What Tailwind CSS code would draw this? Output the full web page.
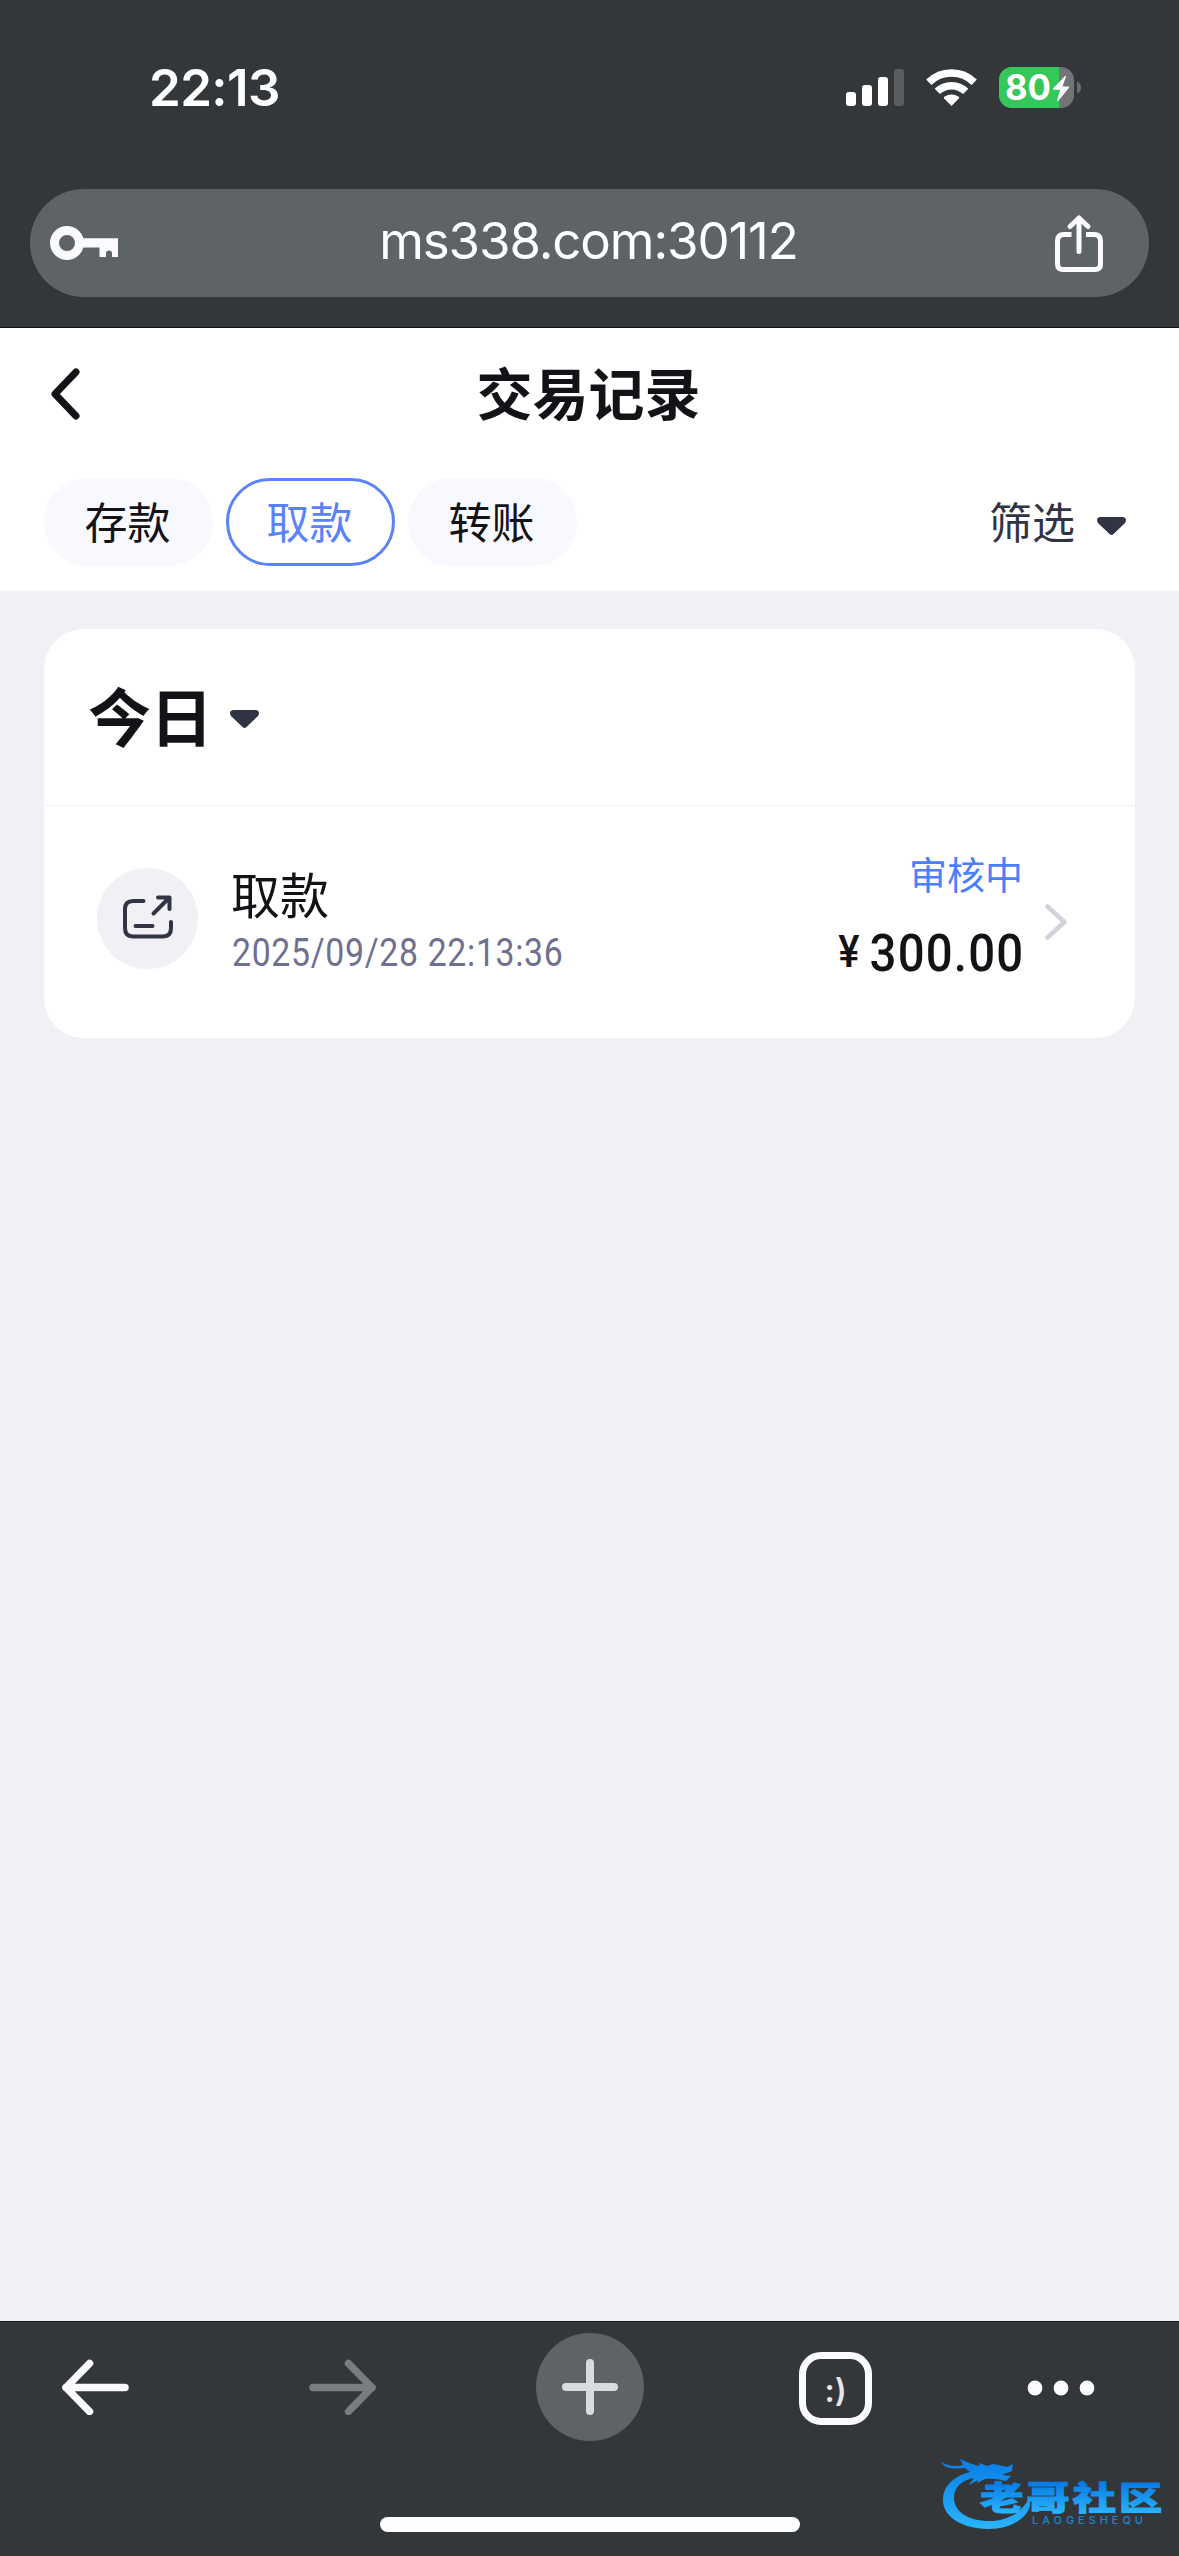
<!DOCTYPE html>
<html lang="zh-CN">
<head>
<meta charset="utf-8">
<title>交易记录</title>
<script src="https://cdn.jsdelivr.net/npm/@tailwindcss/browser@4"></script>
</head>
<body class="w-[1179px] h-[2556px] overflow-hidden bg-[#f1f0f5] flex flex-col font-['Noto_Sans_CJK_SC',sans-serif] text-[#121217]">

<!-- Browser top chrome -->
<header class="h-[328px] shrink-0 bg-[#33373a] border-b border-[#15171a] flex flex-col">
  <div class="h-[189px] shrink-0 flex items-start justify-between pl-[149px] pr-[98px] pt-[67px]">
    <span class="font-['Inter',sans-serif] font-semibold text-[51px] leading-[42px] text-white whitespace-nowrap tracking-[-0.6px]">22:13</span>
    <div class="flex items-start">
      <svg class="block" width="58" height="42" viewBox="0 0 58 42" fill="#fff">
        <rect x="0" y="25" width="10" height="14" rx="3"/>
        <rect x="16" y="18" width="10" height="21" rx="3"/>
        <rect x="32" y="10" width="10" height="29" rx="3"/>
        <rect x="48" y="2" width="10" height="37" rx="3" fill="#5b5c5e"/>
      </svg>
      <svg class="block ml-[22px]" width="51" height="42" viewBox="0 0 51 42" fill="none" stroke="#fff" stroke-width="7.5">
        <path d="M2.8 15.2 A32.5 32.5 0 0 1 48.2 15.2"/>
        <path d="M11.3 24.4 A20.5 20.5 0 0 1 39.7 24.4"/>
        <path d="M25.5 39 L18 31.2 Q17.4 30.4 18.2 29.8 Q25.5 25 32.8 29.8 Q33.6 30.4 33 31.2 Z" fill="#fff" stroke="none"/>
      </svg>
      <svg class="block ml-[22px]" width="82" height="42" viewBox="0 0 82 42">
        <clipPath id="cell"><rect x="0" y="0" width="75" height="41" rx="13"/></clipPath>
        <g clip-path="url(#cell)">
          <rect width="75" height="41" fill="#737477"/>
          <rect width="60" height="41" fill="#34c759"/>
        </g>
        <path d="M78 14.5 Q82 16 82 20.5 Q82 25 78 26.5 Z" fill="#6a6c6e"/>
        <text x="6" y="33.4" font-family="Inter" font-weight="700" font-size="35" textLength="46" lengthAdjust="spacingAndGlyphs" fill="#fff">80</text>
        <path d="M66 9 L54 21.6 Q53.400 22.700 54.600 22.800 L61 22.800 L58 33.500 Q58.400 34.800 59.400 33.800 L70 20.800 Q70.600 19.600 69.400 19.500 L63.500 19.500 L67 9.600 Q67 8.300 66 9 Z" fill="#fff"/>
      </svg>
    </div>
  </div>
  <div class="mx-[30px] h-[108px] rounded-full bg-[#5e6367] flex items-center justify-between pl-5 pr-[46px]">
    <svg class="block" width="68" height="36" viewBox="0 0 68 36" fill="#fbfbff">
      <path fill-rule="evenodd" d="M17 1a17 17 0 1 1 0 34a17 17 0 0 1 0-34Z M17 10a8 8 0 1 0 0 16a8 8 0 0 0 0-16Z"/>
      <path d="M32 13.300 H68 V32 H62 V28.500 Q62 25.500 59 25.500 Q56 25.500 56 28.500 V32 H49.500 V22.600 H32 Z"/>
    </svg>
    <span class="font-['Inter',sans-serif] text-[51px] leading-[60px] text-white whitespace-nowrap tracking-[-1.1px] mb-[4px] ml-[4px]">ms338.com:30112</span>
    <svg class="block" width="48" height="58" viewBox="0 0 48 58" fill="none" stroke="#fbfbff" stroke-width="5" stroke-linecap="round" stroke-linejoin="round">
      <path stroke-linecap="butt" d="M16.500 20.500 H9 Q2.500 20.500 2.500 27 V50 Q2.500 55.500 8 55.500 H40 Q45.500 55.500 45.500 50 V27 Q45.500 20.500 39 20.500 H31"/>
      <path d="M24 37.500 V4 M15 12.500 L24 4 L33 12.500"/>
    </svg>
  </div>
</header>

<!-- Page header -->
<section class="h-[263px] shrink-0 bg-white flex flex-col">
  <div class="h-[132px] grid grid-cols-[1fr_auto_1fr] items-center pl-[51px]">
    <svg class="block" width="30" height="52" viewBox="0 0 30 52" fill="none" stroke="#121217" stroke-width="7" stroke-linecap="round" stroke-linejoin="round"><path d="M25 4 L4 26 L25 48"/></svg>
    <h1 class="text-[56px] leading-[80px] font-bold mr-[53px] pb-[6px]">交易记录</h1>
  </div>
  <div class="mt-[18px] h-[88px] flex items-center gap-[13px] pl-[44px] pr-[53px] text-[43px] leading-[60px]">
    <button class="w-[169px] h-[88px] rounded-full bg-[#f8f9fe] pb-[5px] pr-[2px]">存款</button>
    <button class="w-[169px] h-[88px] rounded-full border-3 border-[#5b82fb] text-[#5b82fb] pb-[5px] pr-[2px]">取款</button>
    <button class="w-[169px] h-[88px] rounded-full bg-[#f8f9fe] pb-[5px] pr-[2px]">转账</button>
    <div class="ml-auto flex items-center gap-[22px] text-[#303443]">
      <span class="pb-[5px]">筛选</span>
      <svg class="block mt-[8px]" width="29" height="18" viewBox="0 0 29 18" fill="#303443"><path d="M3 0 H26 Q29 0.500 29 3 Q29 5 27.500 6.500 L16.500 17 Q14.500 18.800 12.500 17 L1.500 6.500 Q0 5 0 3 Q0 0.500 3 0 Z"/></svg>
    </div>
  </div>
</section>

<!-- Records -->
<main class="h-[1730px] shrink-0 px-[44px] pt-[38px]">
  <div class="h-[409px] rounded-[40px] bg-white">
    <div class="h-[177px] border-b border-[#f0f0f2] flex items-center gap-[22px] pl-[44px]">
      <h2 class="text-[63px] leading-[80px] font-bold w-[120px] whitespace-nowrap tracking-[-1px] pb-[7px]">今日</h2>
      <svg class="block mt-[3px]" width="29" height="18" viewBox="0 0 29 18" fill="#303443"><path d="M3 0 H26 Q29 0.500 29 3 Q29 5 27.500 6.500 L16.500 17 Q14.500 18.800 12.500 17 L1.500 6.500 Q0 5 0 3 Q0 0.500 3 0 Z"/></svg>
    </div>
    <div class="h-[232px] flex items-start pl-[53px] pr-[67px]">
      <div class="mt-[62px] size-[101px] rounded-full bg-[#f1f0f5] flex items-center justify-center">
        <svg class="block mb-[3px]" width="50" height="44" viewBox="0 0 50 44" fill="none" stroke="#303443" stroke-width="4" stroke-linecap="round" stroke-linejoin="round">
          <path d="M20.500 6 H10 Q2 6 2 14 V33 Q2 41.500 10 41.500 H40 Q48 41.500 48 33 V27"/>
          <path d="M12.500 31 H29.500 M30.500 18.500 L46 3 M35 2.500 H46.500 V14"/>
        </svg>
      </div>
      <div class="ml-[34px] mt-[51px] flex flex-col">
        <span class="text-[49px] leading-[72px] -ml-px">取款</span>
        <span class="mt-[4px] font-['Roboto',sans-serif] text-[38px] leading-[40px] text-[#6f6f8f] origin-left scale-x-[.89] tracking-[0.75px] whitespace-nowrap">2025/09/28 22:13:36</span>
      </div>
      <div class="ml-auto mt-[39px] flex flex-col items-end">
        <span class="text-[38px] leading-[56px] text-[#4a80fb]">审核中</span>
        <span class="mt-[23px] font-['Roboto',sans-serif] leading-[60px] whitespace-nowrap flex items-baseline origin-right scale-x-[.91]"><span class="text-[44px] font-medium mr-[11px] pb-[4px] -translate-y-[4px]">¥</span><span class="text-[52px] font-medium tracking-[1.300px] -mr-px">300.00</span></span>
      </div>
      <svg class="block ml-[22px] mt-[98px]" width="23" height="36" viewBox="0 0 23 36" fill="none" stroke="#d2d2dc" stroke-width="4.500" stroke-linecap="round" stroke-linejoin="round"><path d="M2.500 2.500 L19.500 18 L2.500 33.500"/></svg>
    </div>
  </div>
</main>

<!-- Browser bottom toolbar -->
<footer class="relative h-[235px] shrink-0 bg-[#33373a] border-t border-[#15171a] flex flex-col items-center">
  <div class="mt-[11px] h-[108px] w-full flex items-center pl-[62px]">
    <svg class="block" width="67" height="56" viewBox="0 0 67 56" fill="none" stroke="#fbfbff" stroke-width="7.500" stroke-linecap="round" stroke-linejoin="round"><path d="M63 28.500 H4 M27.500 4.500 L4 28.500 L27.500 52.500"/></svg>
    <svg class="block ml-[180px]" width="67" height="56" viewBox="0 0 67 56" fill="none" stroke="#7b7c7e" stroke-width="7.500" stroke-linecap="round" stroke-linejoin="round"><path d="M4 28.500 H63 M39.500 4.500 L63 28.500 L39.500 52.500"/></svg>
    <span class="ml-[160px] size-[108px] rounded-full bg-[#5e6367] flex items-center justify-center">
      <svg class="block" width="56" height="56" viewBox="0 0 56 56" stroke="#dadbdf" stroke-width="8" stroke-linecap="round"><path d="M4 28 H52 M28 4 V52"/></svg>
    </span>
    <span class="ml-[155px] mt-[2px] size-[73px] rounded-[22px] border-7 border-[#fbfbff] flex items-center justify-center font-['Inter',sans-serif] font-semibold text-[32px] leading-[40px] text-[#e4e6ea]"><span class="mt-1.5">:)</span></span>
    <svg class="block ml-[155px] mt-[2px]" width="68" height="16" viewBox="0 0 68 16" fill="#fbfbff"><circle cx="8" cy="8" r="7.400"/><circle cx="34" cy="8" r="7.400"/><circle cx="60" cy="8" r="7.400"/></svg>
  </div>
  <div class="mt-[76px] w-[420px] h-[15px] rounded-full bg-[#fdfdfd]"></div>

  <!-- Community watermark -->
  <svg class="absolute left-[940px] top-[128px]" width="239" height="100" viewBox="0 0 239 100">
    <defs>
      <linearGradient id="ring" gradientUnits="userSpaceOnUse" x1="0" y1="12" x2="0" y2="78"><stop offset="0" stop-color="#0b7fe6"/><stop offset="1" stop-color="#29b4fc"/></linearGradient>
      <linearGradient id="name" gradientUnits="userSpaceOnUse" x1="0" y1="-27" x2="0" y2="2"><stop offset="0" stop-color="#067be6"/><stop offset="1" stop-color="#2ab2fc"/></linearGradient>
    </defs>
    <path fill="url(#ring)" d="M30 22 C14 26 3 36 3 50 C3 68 24 79 49 79 C68 79 86 70 90 56 L90 46 C83 62 68 71 49 71 C29 71 14 62 14 48 C14 37 22 30 34 28 C32 31 30 33 29 35 L38 30 L37 33 L45 29 C55 28 60 30 66 31 L71 26 L62 25 L72 21 L73 14 L67 17 L59 15 L53 14 L47 16 L40 13 L39 16 L32 14 L20 9 L23 15 C15 17 8 16 1 12 C5 19 15 19 25 18 Z"/>
    <path d="M28 4 Q38 10 52 9 M48 2 Q64 3 73 10" fill="none" stroke="#254b66" stroke-opacity=".45" stroke-width="1"/>
    <text transform="translate(40 60) scale(1.340 1)" font-family="Noto Sans CJK SC" font-weight="900" font-size="32.500" letter-spacing="2" fill="url(#name)" stroke="url(#name)" stroke-width=".8">老哥社区</text>
    <text x="92" y="74" font-family="Inter" font-weight="500" font-size="11" textLength="111" lengthAdjust="spacing" fill="#1a85cd">LAOGESHEQU</text>
  </svg>
</footer>
</body>
</html>
